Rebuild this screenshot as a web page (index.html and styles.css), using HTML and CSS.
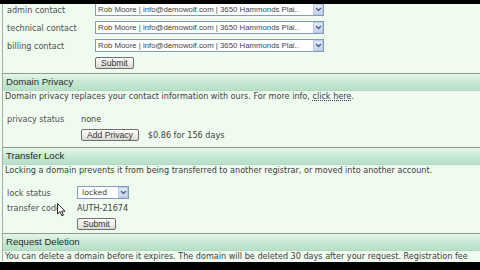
FILE: index.html
```html
<!DOCTYPE html>
<html>
<head>
<meta charset="utf-8">
<link rel="stylesheet" href="styles.css">
</head>
<body>
<div class="screen">
  <div class="bar"></div>
  <div class="page">
    <div class="frame">
      <div class="contacts">
        <div class="row crow">
          <span class="label lw-c">admin contact</span>
          <span class="combo wide"><span class="ctext">Rob Moore | info@demowolf.com | 3650 Hammonds Plai..</span><span class="arrow"><svg width="7" height="5" viewBox="0 0 7 5"><path d="M1 1 L3.5 3.5 L6 1" fill="none" stroke="#4d6185" stroke-width="1.4"/></svg></span></span>
        </div>
        <div class="row crow">
          <span class="label lw-c">technical contact</span>
          <span class="combo wide"><span class="ctext">Rob Moore | info@demowolf.com | 3650 Hammonds Plai..</span><span class="arrow"><svg width="7" height="5" viewBox="0 0 7 5"><path d="M1 1 L3.5 3.5 L6 1" fill="none" stroke="#4d6185" stroke-width="1.4"/></svg></span></span>
        </div>
        <div class="row crow">
          <span class="label lw-c">billing contact</span>
          <span class="combo wide"><span class="ctext">Rob Moore | info@demowolf.com | 3650 Hammonds Plai..</span><span class="arrow"><svg width="7" height="5" viewBox="0 0 7 5"><path d="M1 1 L3.5 3.5 L6 1" fill="none" stroke="#4d6185" stroke-width="1.4"/></svg></span></span>
        </div>
        <div class="row brow-c">
          <span class="lw-c"></span>
          <span class="btn">Submit</span>
        </div>
      </div>

      <div class="head">Domain Privacy</div>
      <div class="desc">Domain privacy replaces your contact information with ours. For more info, <a class="link">click here</a>.</div>
      <div class="row prow">
        <span class="label lw-p">privacy status</span>
        <span class="val">none</span>
      </div>
      <div class="row pbrow">
        <span class="lw-p"></span>
        <span class="btn">Add Privacy</span>
        <span class="val price">$0.86 for 156 days</span>
      </div>

      <div class="head">Transfer Lock</div>
      <div class="desc">Locking a domain prevents it from being transferred to another registrar, or moved into another account.</div>
      <div class="row lrow">
        <span class="label lw-t">lock status</span>
        <span class="combo small"><span class="ctext">locked</span><span class="arrow"><svg width="7" height="5" viewBox="0 0 7 5"><path d="M1 1 L3.5 3.5 L6 1" fill="none" stroke="#4d6185" stroke-width="1.4"/></svg></span></span>
      </div>
      <div class="row trow">
        <span class="label lw-t">transfer code</span>
        <span class="val">AUTH-21674</span>
      </div>
      <div class="row tbrow">
        <span class="lw-t"></span>
        <span class="btn">Submit</span>
      </div>

      <div class="head">Request Deletion</div>
      <div class="desc">You can delete a domain before it expires. The domain will be deleted 30 days after your request. Registration fee</div>
    </div>
    <svg class="cursor" width="9" height="14" viewBox="0 0 9 14"><path d="M0.5 0.5 L0.5 11 L3 8.6 L4.8 12.8 L6.4 12.1 L4.7 8.1 L8 8.1 Z" fill="#fff" stroke="#111" stroke-width="0.9" stroke-linejoin="round"/></svg>
  </div>
  <div class="bar rest"></div>
</div>
</body>
</html>
```

FILE: styles.css
```css
html, body {
  margin: 0;
  padding: 0;
  background: #000;
}
.screen {
  width: 480px;
  height: 270px;
  display: flex;
  flex-direction: column;
  overflow: hidden;
}
.bar {
  height: 4px;
  background: #000;
  flex: none;
}
.bar.rest {
  flex: 1;
}
.page {
  position: relative;
  height: 258px;
  flex: none;
  overflow: hidden;
  background: #effbef;
}
.frame {
  margin-left: 2px;
  border-left: 1px solid #a4aea4;
  height: 100%;
  font-family: "DejaVu Sans", Verdana, sans-serif;
  font-size: 8.1px;
  color: #404040;
}
.row {
  display: flex;
  align-items: center;
  white-space: nowrap;
}
.label {
  padding-left: 4px;
  box-sizing: border-box;
  color: #505050;
  flex: none;
}
.lw-c { width: 92px; flex: none; }
.lw-p { width: 78px; flex: none; }
.lw-t { width: 74px; flex: none; }
.contacts {
  margin-top: -1px;
}
.crow {
  height: 13px;
  margin-bottom: 5px;
}
.brow-c {
  height: 12px;
  margin-bottom: 4px;
}
.combo {
  display: flex;
  align-items: stretch;
  height: 13px;
  box-sizing: border-box;
  border: 1px solid #7f9db9;
  background: #fff;
  font-family: "Liberation Sans", Arial, sans-serif;
  font-size: 7.8px;
  color: #444;
}
.combo.wide { width: 229px; }
.combo.small {
  width: 52px;
  font-family: "DejaVu Sans", Verdana, sans-serif;
  font-size: 7.8px;
}
.small .ctext {
  padding-left: 4px;
}
.ctext {
  flex: 1;
  padding-left: 2px;
  line-height: 11px;
  overflow: hidden;
}
.arrow {
  width: 10px;
  margin: 0;
  box-sizing: border-box;
  border: 1px solid #b9c8e3;
  background: linear-gradient(#e3ebf9, #c5d4ef);
  display: flex;
  align-items: center;
  justify-content: center;
}
.btn {
  display: inline-flex;
  align-items: center;
  justify-content: center;
  height: 12px;
  box-sizing: border-box;
  padding: 0 5px;
  border: 1px solid #707070;
  border-radius: 2px;
  background: linear-gradient(#fdfdfd, #ecebe6 60%, #d8d6cf);
  font-family: "Liberation Sans", Arial, sans-serif;
  font-size: 8.6px;
  color: #333;
}
.head {
  height: 18px;
  box-sizing: border-box;
  border-top: 1px solid #8d9b8d;
  border-bottom: 1px solid #b0d8be;
  background: linear-gradient(#e6f6ea, #d2eedb 30%, #bfe5cd 70%, #b7e1c6);
  font-family: "Liberation Sans", Arial, sans-serif;
  font-size: 9.6px;
  line-height: 16px;
  padding-left: 3px;
  color: #2a2a2a;
}
.desc {
  height: 11px;
  line-height: 11px;
  padding-left: 2px;
  white-space: nowrap;
}
.link {
  color: #3a3a55;
  text-decoration: underline dotted;
}
.val {
  color: #404040;
}
.price {
  margin-left: 9px;
}
.prow {
  height: 12px;
  margin-top: 11px;
}
.pbrow {
  height: 12px;
  margin-top: 4px;
  margin-bottom: 6px;
}
.lrow {
  height: 13px;
  margin-top: 10px;
}
.trow {
  height: 11px;
  margin-top: 3px;
}
.tbrow {
  height: 12px;
  margin-top: 5px;
  margin-bottom: 3px;
}
.cursor {
  position: absolute;
  left: 57px;
  top: 199px;
}
```
